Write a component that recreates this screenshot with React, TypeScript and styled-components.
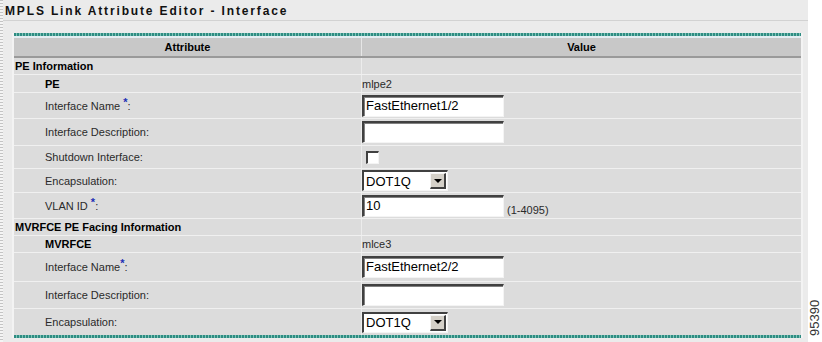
import React from 'react'
import styled, { createGlobalStyle } from 'styled-components'

const GlobalStyle = createGlobalStyle`
  html, body {
    margin: 0;
    padding: 0;
    background: #ffffff;
  }
  body {
    font-family: 'Liberation Sans', Arial, sans-serif;
  }
`

const Page = styled.div`
  display: flex;
  width: 822px;
  height: 342px;
  background: #ffffff;
  overflow: hidden;
`

const LeftRule = styled.div`
  width: 3px;
  flex-shrink: 0;
  background: repeating-linear-gradient(to bottom, #c4c4c4 0 1px, #f4f4f4 1px 3px);
`

const Main = styled.div`
  width: 805px;
  flex-shrink: 0;
  background: #ebebeb;
  display: flex;
  flex-direction: column;
`

const TitleBar = styled.div`
  height: 21px;
  box-sizing: border-box;
  border-bottom: 1px solid #d2d2d2;
  padding: 4px 0 0 2px;
`

const Title = styled.h1`
  margin: 0;
  font-size: 12px;
  line-height: 14px;
  font-weight: bold;
  letter-spacing: 1.85px;
  color: #111111;
`

const TableFrame = styled.div`
  margin: 12px 5px 0 9px;
  border-left: 2px solid #f3f3f3;
  border-right: 2px solid #f3f3f3;
  padding: 5px 0 3px;
  background:
    repeating-linear-gradient(to right, #2e8c82 0 2px, #7fc4b8 2px 3px) top / 100% 3px no-repeat,
    linear-gradient(#e4eef2, #e4eef2) 0 3px / 100% 2px no-repeat,
    repeating-linear-gradient(to right, #2e8c82 0 2px, #7fc4b8 2px 3px) bottom / 100% 3px no-repeat;
`

const HeaderRow = styled.div`
  display: grid;
  grid-template-columns: 348px 1fr;
  height: 20px;
  box-sizing: border-box;
  background: #c8c8c8;
  border-bottom: 2px solid #9a9a9a;
`

const HeadCell = styled.div<{ divider?: boolean }>`
  display: flex;
  align-items: center;
  justify-content: center;
  font-size: 11px;
  font-weight: bold;
  color: #000000;
  border-right: ${p => (p.divider ? '1px solid #e6e6e6' : 'none')};
`

const Row = styled.div<{ h: number }>`
  display: grid;
  grid-template-columns: 348px 1fr;
  height: ${p => p.h}px;
  box-sizing: border-box;
  background: #dcdcdc;
  border-bottom: 1px solid #f0f0f0;

  &:last-child {
    border-bottom: none;
  }
`

const LabelCell = styled.div<{ indent?: boolean; strong?: boolean }>`
  display: flex;
  align-items: center;
  padding-left: ${p => (p.indent ? 31 : 1)}px;
  border-right: 1px solid #ececec;
  font-size: 11px;
  font-weight: ${p => (p.strong ? 'bold' : 'normal')};
  color: ${p => (p.strong ? '#000000' : '#2a2a2a')};
  white-space: pre;
`

const ValueCell = styled.div`
  display: flex;
  align-items: center;
  font-size: 11px;
  color: #2a2a2a;
`

const Required = styled.span`
  color: #1c2fb4;
  font-weight: bold;
  font-size: 11px;
  position: relative;
  top: -4px;
`

const TextBox = styled.div`
  width: 142px;
  height: 22px;
  box-sizing: border-box;
  background: #ffffff;
  border-style: solid;
  border-width: 2px 1px 1px 2px;
  border-color: #404040 #f4f4f4 #f4f4f4 #404040;
  box-shadow: inset 1px 1px 0 #808080;
  font-size: 13px;
  line-height: 18px;
  padding-left: 2px;
  color: #000000;
`

const Hint = styled.span`
  margin: 9px 0 0 3px;
  font-size: 11px;
  color: #2a2a2a;
`

const CheckBox = styled.div`
  width: 13px;
  height: 13px;
  margin-left: 4px;
  box-sizing: border-box;
  background: #ffffff;
  border-style: solid;
  border-width: 2px 1px 1px 2px;
  border-color: #404040 #f4f4f4 #f4f4f4 #404040;
`

const Select = styled.div`
  width: 86px;
  height: 21px;
  box-sizing: border-box;
  display: flex;
  align-items: center;
  background: #ffffff;
  border-style: solid;
  border-width: 2px 1px 1px 2px;
  border-color: #404040 #f4f4f4 #f4f4f4 #404040;
  font-size: 13px;
  color: #000000;
  padding-left: 2px;
`

const SelectText = styled.span`
  flex: 1;
`

const ArrowButton = styled.div`
  width: 16px;
  height: 16px;
  box-sizing: border-box;
  margin-right: 1px;
  background: #d4d0c8;
  border-style: solid;
  border-width: 1px 2px 2px 1px;
  border-color: #f4f4f4 #404040 #404040 #f4f4f4;
  display: flex;
  align-items: center;
  justify-content: center;
`

const Arrow = styled.div`
  width: 0;
  height: 0;
  border-left: 4px solid transparent;
  border-right: 4px solid transparent;
  border-top: 4px solid #000000;
`

const SideMargin = styled.div`
  flex: 1;
  position: relative;
`

const FigureId = styled.span`
  position: absolute;
  left: 0;
  top: 336px;
  transform-origin: 0 0;
  transform: rotate(-90deg);
  font-size: 13px;
  line-height: 13px;
  color: #333333;
  white-space: nowrap;
`

type Field =
  | { kind: 'section'; label: string; h: number }
  | { kind: 'text'; label: string; value: string; h: number }
  | { kind: 'input'; label: string; req?: string; value: string; hint?: string; h: number }
  | { kind: 'check'; label: string; h: number }
  | { kind: 'select'; label: string; value: string; h: number }

const fields: Field[] = [
  { kind: 'section', label: 'PE Information', h: 17 },
  { kind: 'text', label: 'PE', value: 'mlpe2', h: 18 },
  { kind: 'input', label: 'Interface Name', req: ' ', value: 'FastEthernet1/2', h: 26 },
  { kind: 'input', label: 'Interface Description', value: '', h: 27 },
  { kind: 'check', label: 'Shutdown Interface:', h: 23 },
  { kind: 'select', label: 'Encapsulation:', value: 'DOT1Q', h: 24 },
  { kind: 'input', label: 'VLAN ID', req: ' ', value: '10', hint: '(1-4095)', h: 26 },
  { kind: 'section', label: 'MVRFCE PE Facing Information', h: 17 },
  { kind: 'text', label: 'MVRFCE', value: 'mlce3', h: 17 },
  { kind: 'input', label: 'Interface Name', req: '', value: 'FastEthernet2/2', h: 29 },
  { kind: 'input', label: 'Interface Description', value: '', h: 27 },
  { kind: 'select', label: 'Encapsulation:', value: 'DOT1Q', h: 26 },
]

const FieldRow = ({ field }: { field: Field }) => {
  if (field.kind === 'section') {
    return (
      <Row h={field.h}>
        <LabelCell strong>{field.label}</LabelCell>
        <ValueCell />
      </Row>
    )
  }
  if (field.kind === 'text') {
    return (
      <Row h={field.h}>
        <LabelCell indent strong>
          {field.label}
        </LabelCell>
        <ValueCell>{field.value}</ValueCell>
      </Row>
    )
  }
  if (field.kind === 'check') {
    return (
      <Row h={field.h}>
        <LabelCell indent>{field.label}</LabelCell>
        <ValueCell>
          <CheckBox />
        </ValueCell>
      </Row>
    )
  }
  if (field.kind === 'select') {
    return (
      <Row h={field.h}>
        <LabelCell indent>{field.label}</LabelCell>
        <ValueCell>
          <Select>
            <SelectText>{field.value}</SelectText>
            <ArrowButton>
              <Arrow />
            </ArrowButton>
          </Select>
        </ValueCell>
      </Row>
    )
  }
  return (
    <Row h={field.h}>
      <LabelCell indent>
        <span>
          {field.label}
          {field.req !== undefined && (
            <>
              {field.req}
              <Required>*</Required>
            </>
          )}
          :
        </span>
      </LabelCell>
      <ValueCell>
        <TextBox>{field.value}</TextBox>
        {field.hint && <Hint>{field.hint}</Hint>}
      </ValueCell>
    </Row>
  )
}

export default function App() {
  return (
    <>
      <GlobalStyle />
      <Page>
        <LeftRule />
        <Main>
          <TitleBar>
            <Title>MPLS Link Attribute Editor - Interface</Title>
          </TitleBar>
          <TableFrame>
            <HeaderRow>
              <HeadCell divider>Attribute</HeadCell>
              <HeadCell>Value</HeadCell>
            </HeaderRow>
            {fields.map((f, i) => (
              <FieldRow key={i} field={f} />
            ))}
          </TableFrame>
        </Main>
        <SideMargin>
          <FigureId>95390</FigureId>
        </SideMargin>
      </Page>
    </>
  )
}
